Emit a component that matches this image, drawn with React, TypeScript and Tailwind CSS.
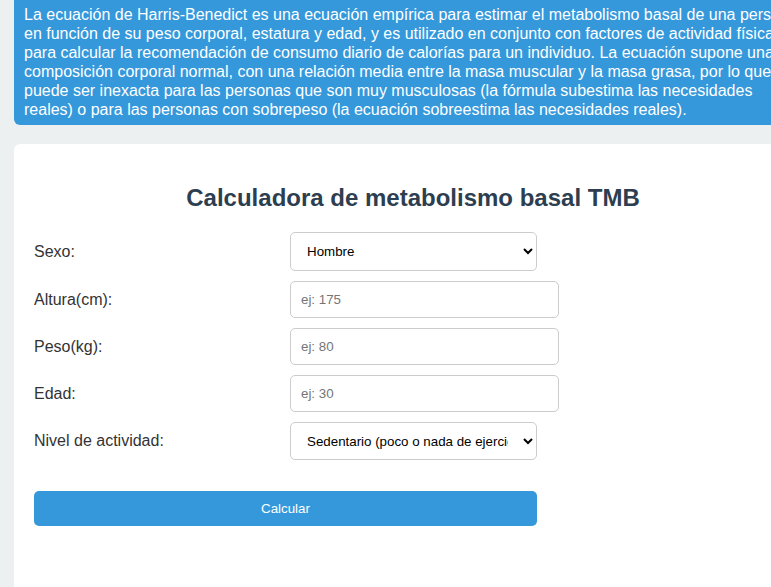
import type { ReactNode } from "react";

const ctl = "font-['Liberation_Sans_Narrow','Arial_Narrow','Liberation_Sans',sans-serif] text-[13.33px]";

function Row({ label, children }: { label: string; children: ReactNode }) {
  return (
    <div className="flex items-center">
      <label className="w-[256px] shrink-0 text-[16px] text-[#333]">{label}</label>
      {children}
    </div>
  );
}

export default function App() {
  return (
    <div className="w-[771px] h-[587px] overflow-hidden bg-[#ecf0f1] font-['Liberation_Sans',Arial,sans-serif]">
      <div className="ml-[14px] w-[798px] rounded-b-[6px] bg-[#3498db] px-[10px] pt-[5px] pb-[6px] text-[16px] leading-[19px] text-white">
        La ecuación de Harris-Benedict es una ecuación empírica para estimar el metabolismo basal de una persona en
        función de su peso corporal, estatura y edad, y es utilizado en conjunto con factores de actividad física para
        calcular la recomendación de consumo diario de calorías para un individuo. La ecuación supone una composición
        corporal normal, con una relación media entre la masa muscular y la masa grasa, por lo que puede ser inexacta
        para las personas que son muy musculosas (la fórmula subestima las necesidades reales) o para las personas con
        sobrepeso (la ecuación sobreestima las necesidades reales).
      </div>

      <div className="ml-[14px] mt-[19px] w-[798px] h-[500px] rounded-t-[6px] bg-white px-[20px] pt-[39px]">
        <h2 className="text-center text-[24px] font-bold text-[#2c3e50] leading-[30px]">
          Calculadora de metabolismo basal TMB
        </h2>

        <div className="mt-[19px] flex flex-col gap-[10px]">
          <Row label="Sexo:">
            <select
              defaultValue="hombre"
              className={`${ctl} h-[39px] w-[247px] rounded-[5px] border border-[#ccc] bg-white px-[12px] text-black`}
            >
              <option value="hombre">Hombre</option>
              <option value="mujer">Mujer</option>
            </select>
          </Row>
          <Row label="Altura(cm):">
            <input
              placeholder="ej: 175"
              className={`${ctl} h-[37px] w-[269px] rounded-[5px] border border-[#ccc] px-[10px] placeholder:text-[#757575]`}
            />
          </Row>
          <Row label="Peso(kg):">
            <input
              placeholder="ej: 80"
              className={`${ctl} h-[37px] w-[269px] rounded-[5px] border border-[#ccc] px-[10px] placeholder:text-[#757575]`}
            />
          </Row>
          <Row label="Edad:">
            <input
              placeholder="ej: 30"
              className={`${ctl} h-[37px] w-[269px] rounded-[5px] border border-[#ccc] px-[10px] placeholder:text-[#757575]`}
            />
          </Row>
          <Row label="Nivel de actividad:">
            <select
              defaultValue="1.2"
              className={`${ctl} h-[38px] w-[247px] rounded-[5px] border border-[#ccc] bg-white px-[12px] text-black`}
            >
              <option value="1.2">Sedentario (poco o nada de ejercicio)</option>
              <option value="1.375">Ligero (ejercicio 1-3 días/semana)</option>
            </select>
          </Row>
        </div>

        <button className={`${ctl} mt-[31px] h-[35px] w-[503px] rounded-[5px] bg-[#3498db] text-white`}>
          Calcular
        </button>
      </div>
    </div>
  );
}
